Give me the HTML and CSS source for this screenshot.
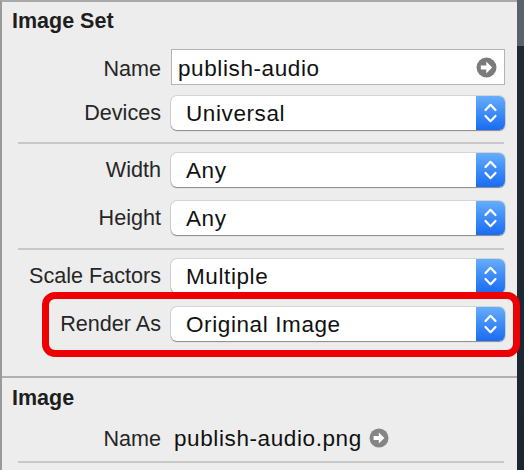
FILE: index.html
```html
<!DOCTYPE html>
<html>
<head>
<meta charset="utf-8">
<link rel="stylesheet" href="styles.css">
</head>
<body>
<div class="panel">
  <div class="title">Image Set</div>

  <div class="row row-name">
    <div class="label">Name</div>
    <div class="field">
      <span class="value">publish-audio</span>
      <svg class="go" width="21" height="21" viewBox="0 0 20 20"><circle cx="10" cy="10" r="9.5" fill="#7b7b7b"/><path d="M4.6 8.1 H9.8 V4.4 L15.4 10 L9.8 15.6 V11.9 H4.6 Z" fill="#fff"/></svg>
    </div>
  </div>

  <div class="row row-devices">
    <div class="label">Devices</div>
    <div class="popup"><span class="value">Universal</span><div class="stepper"><svg width="29" height="34" viewBox="0 0 29 34"><path d="M9.5 14 L14.5 8.8 L19.5 14 M9.5 20 L14.5 25.2 L19.5 20" fill="none" stroke="#fff" stroke-width="2.2" stroke-linecap="round" stroke-linejoin="round"/></svg></div></div>
  </div>

  <div class="sep sep-a"></div>

  <div class="row row-width">
    <div class="label">Width</div>
    <div class="popup"><span class="value">Any</span><div class="stepper"><svg width="29" height="34" viewBox="0 0 29 34"><path d="M9.5 14 L14.5 8.8 L19.5 14 M9.5 20 L14.5 25.2 L19.5 20" fill="none" stroke="#fff" stroke-width="2.2" stroke-linecap="round" stroke-linejoin="round"/></svg></div></div>
  </div>

  <div class="row row-height">
    <div class="label">Height</div>
    <div class="popup"><span class="value">Any</span><div class="stepper"><svg width="29" height="34" viewBox="0 0 29 34"><path d="M9.5 14 L14.5 8.8 L19.5 14 M9.5 20 L14.5 25.2 L19.5 20" fill="none" stroke="#fff" stroke-width="2.2" stroke-linecap="round" stroke-linejoin="round"/></svg></div></div>
  </div>

  <div class="sep sep-b"></div>

  <div class="row row-scale">
    <div class="label">Scale Factors</div>
    <div class="popup"><span class="value">Multiple</span><div class="stepper"><svg width="29" height="34" viewBox="0 0 29 34"><path d="M9.5 14 L14.5 8.8 L19.5 14 M9.5 20 L14.5 25.2 L19.5 20" fill="none" stroke="#fff" stroke-width="2.2" stroke-linecap="round" stroke-linejoin="round"/></svg></div></div>
  </div>

  <div class="row row-render">
    <div class="label">Render As</div>
    <div class="popup"><span class="value">Original Image</span><div class="stepper"><svg width="29" height="34" viewBox="0 0 29 34"><path d="M9.5 14 L14.5 8.8 L19.5 14 M9.5 20 L14.5 25.2 L19.5 20" fill="none" stroke="#fff" stroke-width="2.2" stroke-linecap="round" stroke-linejoin="round"/></svg></div></div>
    <div class="highlight"></div>
  </div>

  <div class="section-sep"></div>

  <div class="title title-image">Image</div>

  <div class="row row-file">
    <div class="label">Name</div>
    <div class="file">
      <span class="value">publish-audio.png</span>
      <svg class="go" width="20" height="20" viewBox="0 0 20 20"><circle cx="10" cy="10" r="9.5" fill="#858585"/><path d="M4.6 8.1 H9.8 V4.4 L15.4 10 L9.8 15.6 V11.9 H4.6 Z" fill="#fff"/></svg>
    </div>
  </div>

  <div class="sep sep-c"></div>
</div>
</body>
</html>
```

FILE: styles.css
```css
* { box-sizing: border-box; }

html, body {
  margin: 0;
  padding: 0;
}

body {
  width: 524px;
  height: 470px;
  overflow: hidden;
  background: linear-gradient(to bottom, #5a636b 0, #5a636b 46px, #1f2a34 46px, #1c2630 100%);
  font-family: "Liberation Sans", Arial, sans-serif;
  color: #222;
}

.panel {
  position: relative;
  width: 517px;
  height: 470px;
  background: #ededed;
  border-left: 2px solid #9a9a9a;
  border-top: 2px solid #a8a8a8;
  display: flex;
  flex-direction: column;
}

.title {
  margin-top: 7px;
  padding-left: 10px;
  font-weight: bold;
  font-size: 21.5px;
  line-height: 24px;
  color: #1e1e1e;
}

.row {
  display: grid;
  grid-template-columns: 159px 334px;
  column-gap: 10px;
  align-items: center;
}

.label {
  text-align: right;
  font-size: 21.6px;
  line-height: 24px;
  color: #262626;
}

.row-name .label { padding-top: 3px; }

.value {
  font-size: 22.5px;
  letter-spacing: 0.6px;
  line-height: 26px;
  color: #111;
  white-space: nowrap;
}

.row-name { margin-top: 16px; height: 36px; }
.row-devices { margin-top: 11px; height: 34px; }
.row-width { margin-top: 9px; height: 34px; }
.row-height { margin-top: 14px; height: 34px; }
.row-scale { margin-top: 9px; height: 34px; }
.row-render { margin-top: 14px; height: 34px; position: relative; }
.row-file { margin-top: 16px; height: 24px; }

.field {
  height: 36px;
  background: #fff;
  border: 1px solid #b4b4b4;
  display: flex;
  align-items: center;
  justify-content: space-between;
  padding: 3px 7px 0 6px;
}

.field .go { margin-top: -3px; }

.popup {
  height: 34px;
  background: #fff;
  border-radius: 6px;
  box-shadow: 0 0 0 1px rgba(0, 0, 0, 0.1), 0 1px 1px rgba(0, 0, 0, 0.35);
  display: flex;
  align-items: center;
  justify-content: space-between;
  padding-left: 15px;
  overflow: hidden;
}

.popup .value { padding-top: 1px; }

.stepper {
  width: 29px;
  height: 34px;
  background: linear-gradient(to bottom, #67adfa 0%, #3d8cf7 50%, #1a6cf2 100%);
  display: flex;
}

.sep {
  margin-left: 16px;
  width: 486px;
  height: 2px;
  background: #c8c8c8;
}

.sep-a { margin-top: 12px; }
.sep-b { margin-top: 13px; }
.sep-c { margin-top: 11px; }

.section-sep {
  margin-top: 35px;
  width: 100%;
  height: 2px;
  background: #b0b0b0;
}

.title-image { margin-top: 8px; }

.file {
  display: flex;
  align-items: center;
  gap: 7px;
  padding-left: 3px;
}

.file .go { margin-top: -2px; }

.highlight {
  position: absolute;
  left: 40px;
  top: -15px;
  width: 478px;
  height: 65px;
  border: 7px solid #ee0000;
  border-radius: 13px;
  pointer-events: none;
}
```
